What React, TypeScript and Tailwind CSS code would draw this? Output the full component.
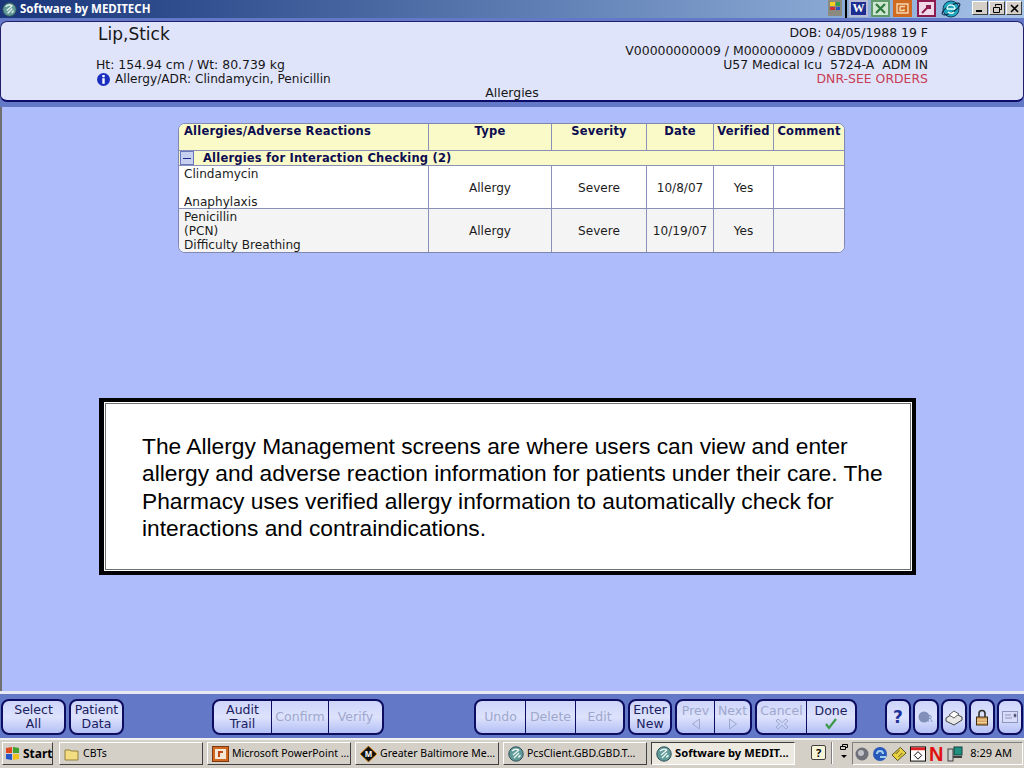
import type { ReactNode } from 'react';

const ui = { fontFamily: '"DejaVu Sans", Verdana, sans-serif' };

function AppIcon({ size = 16 }: { size?: number }) {
  return (
    <svg width={size} height={size} viewBox="0 0 16 16" className="shrink-0">
      <circle cx="8" cy="8" r="7.2" fill="#5f9a98" stroke="#2f4f5a" strokeWidth="1" />
      <path d="M4 5c2-2 5-2 7-1M5 9l6-5M6 12l5-5M10 11c1 0 2-1 2-2" stroke="#e8f4f0" strokeWidth="1.4" fill="none" />
    </svg>
  );
}

function TitleIcons() {
  return (
    <div className="flex items-start ml-auto h-[18px]">
      <div className="w-[14px] h-[16px] bg-[#8a8a80] grid grid-cols-2 gap-px p-[2px] pb-[6px] mr-[3px]">
        <span className="bg-[#f4d020]" />
        <span className="bg-[#30a050]" />
        <span className="bg-[#d03030]" />
        <span className="bg-[#3050c0]" />
      </div>
      <div className="w-[2px] h-[18px] bg-black mr-[2px]" />
      <div className="w-[19px] h-[17px] bg-[#b8bcd4] p-[2px] mr-[3px]">
        <div className="w-full h-full bg-[#1c2c90] text-white text-[12px] leading-[13px] font-bold text-center" style={{ fontFamily: '"Liberation Serif", serif' }}>W</div>
      </div>
      <div className="w-[19px] h-[17px] bg-[#5f9a6c] p-[2px] mr-[3px]">
        <svg viewBox="0 0 15 13" className="w-full h-full">
          <rect width="15" height="13" fill="#cfe6d0" />
          <path d="M3 2l9 9M12 2l-9 9" stroke="#2f7a40" strokeWidth="2.2" />
        </svg>
      </div>
      <div className="w-[19px] h-[17px] bg-[#d06a20] p-[3px] mr-[5px]">
        <svg viewBox="0 0 13 11" className="w-full h-full">
          <path d="M1 1h11v9H1z" fill="none" stroke="#f6d8b0" strokeWidth="1.4" />
          <path d="M4 3.500h5M4 3.500v4h4V6" fill="none" stroke="#f6d8b0" strokeWidth="1.4" />
        </svg>
      </div>
      <div className="w-[19px] h-[17px] bg-[#8c1c50] p-[2px] mr-[5px]">
        <svg viewBox="0 0 15 13" className="w-full h-full">
          <rect width="15" height="13" fill="#f0d8e8" />
          <path d="M3 11l5-5" stroke="#8c1c50" strokeWidth="2" />
          <path d="M7 3h5v4H7z" fill="#8c1c50" />
        </svg>
      </div>
      <svg width="20" height="18" viewBox="0 0 20 18" className="mr-[11px] shrink-0">
        <circle cx="10" cy="9" r="8" fill="#20a8c0" stroke="#10405a" />
        <ellipse cx="10" cy="9" rx="10" ry="3.5" fill="none" stroke="#103050" strokeWidth="1.2" transform="rotate(-30 10 9)" />
        <path d="M6 9h8M6 9a4 4 0 0 1 8 0M7 12a4 4 0 0 0 6 0" stroke="#e0fff8" strokeWidth="1.5" fill="none" />
      </svg>
      <div className="flex gap-px mr-[2px] mt-[1px]">
        {['min', 'max', 'close'].map((k) => (
          <div key={k} className="w-[16px] h-[14px] bg-[#d4d0c8] border border-t-white border-l-white border-r-[#404040] border-b-[#404040] flex items-center justify-center">
            {k === 'min' && <div className="w-[6px] h-[2px] bg-black mt-[6px] -ml-[2px]" />}
            {k === 'max' && (
              <svg width="9" height="9" viewBox="0 0 9 9">
                <path d="M2.5 2.5V.5h6v5h-2M.5 3.5h6v5h-6z" fill="none" stroke="#000" />
              </svg>
            )}
            {k === 'close' && (
              <svg width="9" height="9" viewBox="0 0 9 9">
                <path d="M1 1l7 7M8 1L1 8" stroke="#000" strokeWidth="1.6" />
              </svg>
            )}
          </div>
        ))}
      </div>
    </div>
  );
}

function PatientHeader() {
  return (
    <div className="h-[89px] bg-[#6478c8] pt-[3px] shrink-0 relative">
      <div className="h-[81px] bg-[#e0e4fb] border-b-[2px] border-[#0c0c68] border-t-[1px] border-t-[#20206a] border-x border-x-[#20206a] rounded-[7px] flex justify-between text-[#161616] text-[12.45px] leading-[14px]">
        <div className="ml-[95px]">
          <div className="text-[17px] leading-[20px] mt-[2px] ml-[2px]">Lip,Stick</div>
          <div className="mt-[14px]">Ht: 154.94 cm / Wt: 80.739 kg</div>
          <div className="flex items-center gap-[5px]">
            <svg width="13" height="13" viewBox="0 0 13 13" className="ml-px shrink-0">
              <circle cx="6.5" cy="6.5" r="6.5" fill="#1a2fc0" />
              <rect x="5.3" y="2" width="2.4" height="2.2" fill="#fff" />
              <rect x="5.3" y="5.2" width="2.4" height="5.6" fill="#fff" />
            </svg>
            <span className="text-[12.15px]">Allergy/ADR: Clindamycin, Penicillin</span>
          </div>
        </div>
        <div className="text-right mr-[95px] mt-[4px]">
          <div>DOB: 04/05/1988 19 F</div>
          <div className="mt-[4px]">V00000000009 / M000000009 / GBDVD0000009</div>
          <div className="whitespace-pre">U57 Medical Icu  5724-A  ADM IN</div>
          <div className="text-[#c83c54]">DNR-SEE ORDERS</div>
        </div>
      </div>
      <div className="absolute left-0 right-0 top-[68px] text-center text-[12.45px] leading-[14px] text-[#161616]">Allergies</div>
    </div>
  );
}

const head = ['Type', 'Severity', 'Date', 'Verified', 'Comment'];
const cols = 'grid grid-cols-[250px_123px_95px_67px_60px_1fr]';

function Cell({ children, last }: { children?: ReactNode; last?: boolean }) {
  return <div className={`flex items-center justify-center pt-px ${last ? '' : 'border-r border-[#8a90b8]'}`}>{children}</div>;
}

function AllergyTable() {
  return (
    <div className="ml-[178px] mt-[16px] w-[667px] h-[130px] rounded-[7px] border border-[#8088b0] overflow-hidden text-[12.1px] leading-[14px] text-[#1c1c1c] bg-white shrink-0">
      <div className={`${cols} h-[27px] bg-[#fafac8] border-b border-[#8a90b8] text-[#0c0c50] font-bold text-[11.5px] leading-[15px] tracking-[0.2px]`}>
        <div className="border-r border-[#8a90b8] pl-[5px]">Allergies/Adverse Reactions</div>
        {head.map((h, i) => (
          <div key={h} className={`text-center ${i < 4 ? 'border-r border-[#8a90b8]' : ''}`}>{h}</div>
        ))}
      </div>
      <div className="h-[15px] bg-[#fafac8] border-b border-[#8a90b8] flex items-center text-[#0c0c50] font-bold text-[11.5px] tracking-[0.2px]">
        <div className="ml-px w-[14px] h-[14px] bg-[#c8d0f0] border border-[#6878c0] flex items-center justify-center">
          <div className="w-[8px] h-px bg-[#1c2c90]" />
        </div>
        <span className="ml-[9px]">Allergies for Interaction Checking (2)</span>
      </div>
      <div className={`${cols} h-[43px] border-b border-[#8a90b8]`}>
        <div className="border-r border-[#8a90b8] pl-[5px] pt-px">
          <div>Clindamycin</div>
          <div className="h-[14px]" />
          <div>Anaphylaxis</div>
        </div>
        <Cell>Allergy</Cell>
        <Cell>Severe</Cell>
        <Cell>10/8/07</Cell>
        <Cell>Yes</Cell>
        <Cell last />
      </div>
      <div className={`${cols} h-[43px] bg-[#f4f4f4]`}>
        <div className="border-r border-[#8a90b8] pl-[5px] pt-px">
          <div>Penicillin</div>
          <div>(PCN)</div>
          <div>Difficulty Breathing</div>
        </div>
        <Cell>Allergy</Cell>
        <Cell>Severe</Cell>
        <Cell>10/19/07</Cell>
        <Cell>Yes</Cell>
        <Cell last />
      </div>
    </div>
  );
}

function Callout() {
  return (
    <div className="ml-[99px] mt-[145px] w-[817px] h-[177px] bg-white border-[4px] border-l-[5px] border-black p-px shrink-0">
      <div className="h-full border border-[#707070] pl-[36px] pt-[29px] pr-[15px] text-[22.75px] leading-[27.3px] text-black" style={{ fontFamily: '"Liberation Sans", Arial, sans-serif' }}>
        The Allergy Management screens are where users can view and enter allergy and adverse reaction information for patients under their care. The Pharmacy uses verified allergy information to automatically check for interactions and contraindications.
      </div>
    </div>
  );
}

type Btn = { label: string[]; w: number; off?: boolean; icon?: ReactNode };

function BtnGroup({ items, ml }: { items: Btn[]; ml: number }) {
  return (
    <div style={{ marginLeft: ml }} className="flex h-[36px] rounded-[8px] border-2 border-[#0c0c60] bg-gradient-to-b from-[#cdd5fb] via-[#dde2fc] to-[#b4c0f4] overflow-hidden">
      {items.map((b, i) => (
        <div
          key={b.label.join()}
          style={{ width: b.w }}
          className={`flex flex-col items-center justify-center text-[12.5px] leading-[14px] ${i > 0 ? 'border-l border-[#0c0c60]' : ''} ${b.off ? 'text-[#9ea8cc]' : 'text-[#1a2060]'}`}
        >
          {b.label.map((l) => (
            <span key={l}>{l}</span>
          ))}
          {b.icon}
        </div>
      ))}
    </div>
  );
}

function IconBtn({ children, ml }: { children: ReactNode; ml: number }) {
  return (
    <div style={{ marginLeft: ml }} className="w-[26px] h-[36px] rounded-[8px] border-2 border-[#0c0c60] bg-gradient-to-b from-[#cdd5fb] via-[#dde2fc] to-[#b4c0f4] flex items-center justify-center shrink-0">
      {children}
    </div>
  );
}

function Toolbar() {
  return (
    <div className="h-[47px] bg-[#6478c8] border-t-[3px] border-[#e8e8f4] flex items-start pt-[5px] pl-[1px] shrink-0">
      <BtnGroup ml={0} items={[{ label: ['Select', 'All'], w: 61 }]} />
      <BtnGroup ml={3} items={[{ label: ['Patient', 'Data'], w: 51 }]} />
      <BtnGroup ml={88} items={[{ label: ['Audit', 'Trail'], w: 57 }, { label: ['Confirm'], w: 57, off: true }, { label: ['Verify'], w: 54, off: true }]} />
      <BtnGroup ml={90} items={[{ label: ['Undo'], w: 49, off: true }, { label: ['Delete'], w: 50, off: true }, { label: ['Edit'], w: 48, off: true }]} />
      <BtnGroup ml={3} items={[{ label: ['Enter', 'New'], w: 40 }]} />
      <BtnGroup
        ml={3}
        items={[
          {
            label: ['Prev'],
            w: 37,
            off: true,
            icon: (
              <svg width="10" height="12" viewBox="0 0 10 12">
                <path d="M8.5 1L1.5 6l7 5z" fill="none" stroke="#9ea8cc" />
              </svg>
            ),
          },
          {
            label: ['Next'],
            w: 36,
            off: true,
            icon: (
              <svg width="10" height="12" viewBox="0 0 10 12">
                <path d="M1.5 1l7 5-7 5z" fill="none" stroke="#9ea8cc" />
              </svg>
            ),
          },
        ]}
      />
      <BtnGroup
        ml={3}
        items={[
          {
            label: ['Cancel'],
            w: 49,
            off: true,
            icon: (
              <svg width="14" height="12" viewBox="0 0 14 12">
                <path d="M3 1l4 3.500L11 1l2 2-3.500 3L13 9l-2 2-4-3.500L3 11 1 9l3.500-3L1 3z" fill="none" stroke="#9ea8cc" />
              </svg>
            ),
          },
          {
            label: ['Done'],
            w: 49,
            icon: (
              <svg width="14" height="12" viewBox="0 0 14 12">
                <path d="M2 6l3 4 7-9" fill="none" stroke="#3e9a48" strokeWidth="2.2" />
              </svg>
            ),
          },
        ]}
      />
      <IconBtn ml={28}>
        <span className="text-[#20309a] text-[17px] font-bold leading-none">?</span>
      </IconBtn>
      <IconBtn ml={2}>
        <svg width="18" height="14" viewBox="0 0 18 14">
          <circle cx="7" cy="7" r="5.500" fill="#8090b8" />
          <text x="10" y="12" fontSize="8" fill="#8090b8">R</text>
        </svg>
      </IconBtn>
      <IconBtn ml={2}>
        <svg width="20" height="17" viewBox="0 0 20 17">
          <path d="M2 9l8-5 8 4v3l-8 5-8-4z" fill="#e8e8e8" stroke="#404040" />
          <path d="M5 6l5-4 5 3-5 4z" fill="#fff" stroke="#606060" />
        </svg>
      </IconBtn>
      <IconBtn ml={2}>
        <svg width="14" height="17" viewBox="0 0 14 17">
          <path d="M4 8V4.500a3 3 0 0 1 6 0V8" fill="none" stroke="#303028" strokeWidth="1.6" />
          <rect x="1.500" y="8" width="11" height="8" fill="#d8a060" stroke="#403018" />
          <path d="M2 11h10M2 13.500h10" stroke="#f0d8a0" />
        </svg>
      </IconBtn>
      <IconBtn ml={2}>
        <svg width="16" height="12" viewBox="0 0 16 12">
          <rect x=".5" y=".5" width="15" height="11" fill="#d8dcf8" stroke="#8d96bc" />
          <path d="M3 4h6M3 7h7M12 3h2v3h-2z" stroke="#8d96bc" />
        </svg>
      </IconBtn>
    </div>
  );
}

function TaskBtn({ icon, label, active, ml, w = 144 }: { icon: ReactNode; label: string; active?: boolean; ml: number; w?: number }) {
  return (
    <div
      style={{ marginLeft: ml, width: w }}
      className={`h-[23px] flex items-center gap-[3px] pl-[4px] whitespace-nowrap overflow-hidden text-black border ${
        active
          ? 'bg-[#ece9e0] border-t-[#404040] border-l-[#404040] border-r-white border-b-white font-bold text-[11.2px]'
          : 'bg-[#d4d0c8] border-t-white border-l-white border-r-[#404040] border-b-[#404040] text-[10.5px]'
      }`}
    >
      {icon}
      <span>{label}</span>
    </div>
  );
}

function Taskbar() {
  return (
    <div className="h-[30px] bg-[#d4d0c8] border-t-2 border-[#f0f0f0] flex items-start pt-[2px] pl-[2px] shrink-0" style={{ fontFamily: '"Noto Sans", Tahoma, sans-serif' }}>
      <div className="w-[51px] h-[23px] bg-[#d4d0c8] border border-t-white border-l-white border-r-[#404040] border-b-[#404040] flex items-center gap-[2px] pl-[2px] font-bold text-[12px] text-black">
        <svg width="16" height="15" viewBox="0 0 16 15" className="shrink-0">
          <path d="M1 2l6-1v6H1z" fill="#e04820" />
          <path d="M8 1l6 1v5H8z" fill="#40a030" />
          <path d="M1 8h6v6l-6-1z" fill="#2858c8" />
          <path d="M8 8h6v5l-6 1z" fill="#f0c020" />
        </svg>
        Start
      </div>
      <TaskBtn
        ml={6}
        label="CBTs"
        icon={
          <svg width="16" height="14" viewBox="0 0 16 14" className="shrink-0">
            <path d="M1 3h5l1 1h7v9H1z" fill="#f4dc80" stroke="#90803a" />
          </svg>
        }
      />
      <TaskBtn
        ml={4}
        label="Microsoft PowerPoint ..."
        icon={
          <svg width="17" height="16" viewBox="0 0 17 16" className="shrink-0">
            <rect x=".5" y=".5" width="16" height="15" fill="#d06a20" stroke="#803810" />
            <rect x="3" y="3" width="11" height="10" fill="#f6e8d8" />
            <path d="M6 5h5v2H8v4H6z" fill="#c04810" />
          </svg>
        }
      />
      <TaskBtn
        ml={4}
        label="Greater Baltimore Me..."
        icon={
          <svg width="17" height="16" viewBox="0 0 17 16" className="shrink-0">
            <path d="M8.500 0L17 8l-8.500 8L0 8z" fill="#101010" stroke="#e09020" />
            <text x="8.500" y="11" fontSize="8" fontWeight="bold" fill="#fff" textAnchor="middle">M</text>
          </svg>
        }
      />
      <TaskBtn ml={4} label="PcsClient.GBD.GBD.T..." icon={<AppIcon />} />
      <TaskBtn ml={4} label="Software by MEDIT..." active icon={<AppIcon />} />
      <div className="ml-[16px] mt-[3px] w-[15px] h-[15px] border border-[#404040] rounded-[2px] bg-[#f8f4d8] text-[11px] leading-[13px] font-bold text-center">?</div>
      <div className="ml-[5px] w-[2px] h-[22px] bg-[#808080] border-r border-white" />
      <div className="ml-[5px] w-[12px] flex flex-col items-center pt-px">
        <svg width="10" height="18" viewBox="0 0 10 18">
          <path d="M3.500 3.500V1.500h5v3h-2M1.500 3.500h5v3h-5z" fill="none" stroke="#000" />
          <path d="M2 12h6l-3 3z" fill="#000" />
        </svg>
      </div>
      <div className="ml-[2px] w-[171px] h-[23px] border border-t-[#808080] border-l-[#808080] border-r-white border-b-white flex items-center pl-[2px] gap-[3px]">
        <svg width="14" height="16" viewBox="0 0 14 16" className="shrink-0">
          <circle cx="7" cy="8" r="6.500" fill="#70707a" />
          <circle cx="6" cy="7" r="3" fill="#c0c0c8" />
        </svg>
        <svg width="16" height="16" viewBox="0 0 16 16" className="shrink-0">
          <circle cx="8" cy="8" r="7" fill="#2858b8" />
          <path d="M5 8a3 3 0 1 1 6 0M8 11h6" stroke="#a0d0f0" strokeWidth="2" fill="none" />
        </svg>
        <svg width="16" height="16" viewBox="0 0 17 16" className="shrink-0">
          <path d="M10 1l6 6-9 8-6-6z" fill="#e8d040" stroke="#505020" />
          <path d="M5 8l4-4M8 11l4-4" stroke="#505020" />
        </svg>
        <svg width="16" height="16" viewBox="0 0 17 16" className="shrink-0">
          <rect x=".5" y=".5" width="16" height="15" fill="#fff" stroke="#000" />
          <rect x="1" y="1" width="15" height="3" fill="#e02020" />
          <path d="M8.500 5.500l4 4-4 4-4-4z" fill="#fff" stroke="#000" />
        </svg>
        <span className="text-[#e01010] font-bold text-[20px] leading-none w-[15px]" style={{ fontFamily: '"Liberation Sans", sans-serif' }}>N</span>
        <svg width="16" height="16" viewBox="0 0 16 16" className="shrink-0">
          <rect x="1" y="3" width="5" height="12" fill="#d0d0d0" stroke="#404040" />
          <rect x="7" y="1" width="8" height="8" fill="#209080" stroke="#104040" />
          <path d="M6 11h9" stroke="#404040" strokeWidth="2" />
        </svg>
        <span className="ml-auto mr-[10px] text-[11px] text-black">8:29 AM</span>
      </div>
    </div>
  );
}

export default function App() {
  return (
    <div className="w-[1024px] h-[768px] flex flex-col overflow-hidden bg-[#aebcfc]" style={ui}>
      <div className="h-[18px] bg-gradient-to-r from-[#1a357a] to-[#a6c4e8] flex items-center pl-[2px] shrink-0">
        <AppIcon size={15} />
        <span className="ml-[3px] text-white text-[11.5px] font-bold" style={{ fontFamily: '"Noto Sans", Tahoma, sans-serif' }}>Software by MEDITECH</span>
        <TitleIcons />
      </div>
      <PatientHeader />
      <div className="flex-1 flex flex-col border-l-2 border-[#707070]">
        <div className="-ml-[2px] flex flex-col">
          <AllergyTable />
          <Callout />
        </div>
      </div>
      <Toolbar />
      <Taskbar />
    </div>
  );
}
